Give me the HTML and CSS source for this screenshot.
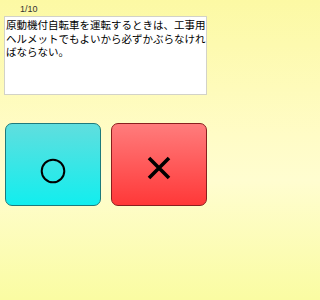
FILE: index.html
```html
<!DOCTYPE html>
<html lang="ja">
<head>
<meta charset="utf-8">
<link rel="stylesheet" href="styles.css">
</head>
<body>
<div class="page">
  <div class="counter">1/10</div>
  <div class="question">原動機付自転車を運転するときは、工事用ヘルメットでもよいから必ずかぶらなければならない。</div>
  <div class="answers">
    <button class="answer answer-yes" type="button" aria-label="○">
      <svg width="26" height="26" viewBox="0 0 26 26"><circle cx="13" cy="13" r="11.3" fill="none" stroke="#000" stroke-width="2"/></svg>
    </button>
    <button class="answer answer-no" type="button" aria-label="×">
      <svg width="26" height="26" viewBox="0 0 26 26"><path d="M3 3 L23 23 M23 3 L3 23" fill="none" stroke="#000" stroke-width="3.6"/></svg>
    </button>
  </div>
</div>
</body>
</html>
```
FILE: styles.css
```css
html, body {
  margin: 0;
  padding: 0;
}
body {
  width: 212px;
  height: 300px;
  overflow: hidden;
  background: linear-gradient(#fcf9a4 0%, #fffcc6 45%, #fffdd0 60%, #fafca2 100%);
  font-family: "Liberation Sans", Arial, sans-serif;
}
.page {
  display: flex;
  flex-direction: column;
  height: 300px;
}
.counter {
  height: 16px;
  box-sizing: border-box;
  padding: 4px 0 0 20px;
  font-size: 9px;
  line-height: 10px;
  color: #333;
}
.question {
  margin: 0 5px 0 4px;
  height: 79px;
  box-sizing: border-box;
  padding: 1px 0 0 1px;
  background: #fff;
  border: 1px solid #d2d2c8;
  font-family: "Noto Sans CJK JP", "Noto Sans", sans-serif;
  font-size: 10.5px;
  line-height: 13.6px;
  color: #000;
}
.answers {
  display: flex;
  gap: 10px;
  margin-top: 28px;
  padding: 0 5px;
}
.answer {
  width: 96px;
  height: 83px;
  box-sizing: border-box;
  margin: 0;
  padding: 0;
  border-radius: 7px;
  display: flex;
  align-items: center;
  justify-content: center;
  cursor: pointer;
}
.answer svg {
  display: block;
}
.answer-yes {
  background: linear-gradient(#60dede, #12eeee);
  border: 1.5px solid #1d7a7c;
  padding-top: 12px;
}
.answer-no {
  background: linear-gradient(#ff7c7c, #ff3838);
  border: 1.5px solid #8a1e1e;
  padding-top: 7px;
}
```
